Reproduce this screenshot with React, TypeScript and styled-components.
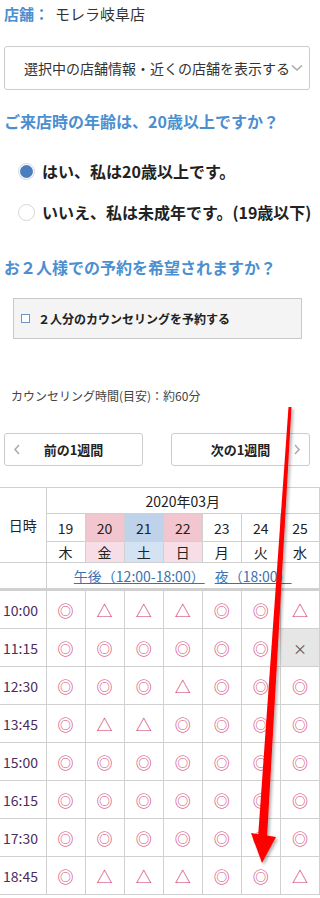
import React from 'react'
import styled, { createGlobalStyle } from 'styled-components'

const font = '"Noto Sans CJK JP", "Noto Sans", sans-serif'
const blue = '#4b8fd1'
const line = '#d0d0d0'

const Global = createGlobalStyle`
  html, body { margin: 0; padding: 0; background: #fff; }
  body { font-family: ${font}; color: #333; }
`

const Page = styled.div`
  position: relative;
  width: 320px;
  height: 898px;
  overflow: hidden;
`

const Store = styled.div`
  padding: 4px 4px 0;
  font-size: 15px;
  line-height: 20px;
  color: #333;
`

const StoreLabel = styled.span`
  color: ${blue};
  font-weight: bold;
  margin-right: 6px;
`

const Select = styled.div`
  margin: 22px 10px 0 4px;
  height: 42px;
  border: 1px solid #ccc;
  border-radius: 3px;
  display: flex;
  align-items: center;
  padding-left: 19px;
  font-size: 14px;
  color: #333;
  white-space: nowrap;
  overflow: hidden;
`

const Chevron = styled.svg`
  flex: none;
  margin-left: 1px;
`

const Question = styled.h2`
  margin: ${p => p.$top}px 0 0 4px;
  font-size: 16px;
  line-height: 22px;
  font-weight: bold;
  color: ${blue};
  white-space: nowrap;
`

const Radios = styled.div`
  display: flex;
  flex-direction: column;
  gap: 18px;
  margin: 28px 0 0 18px;
`

const RadioRow = styled.label`
  display: flex;
  align-items: center;
  gap: 7px;
  font-size: 16px;
  font-weight: bold;
  color: #222;
  white-space: nowrap;
  line-height: 23px;
`

const Dot = styled.span`
  flex: none;
  width: 15px;
  height: 15px;
  border-radius: 50%;
  border: 1px solid #d6d6d6;
  background: #fff;
  display: flex;
  align-items: center;
  justify-content: center;
  &::after {
    content: '';
    width: 13px;
    height: 13px;
    border-radius: 50%;
    background: ${p => (p.$on ? '#4a7fbf' : 'transparent')};
  }
`

const CheckBox = styled.div`
  margin: 20px 18px 0 13px;
  height: 39px;
  background: #f4f4f4;
  border: 1px solid #c8c8c8;
  display: flex;
  align-items: center;
  padding-left: 7px;
  gap: 8px;
  font-size: 12px;
  font-weight: bold;
  color: #222;
`

const Square = styled.span`
  width: 7px;
  height: 7px;
  border: 1px solid #6a95c8;
  background: #fff;
`

const Note = styled.div`
  margin: 48px 0 0 11px;
  font-size: 12px;
  line-height: 18px;
  color: #444;
`

const Nav = styled.div`
  display: flex;
  justify-content: space-between;
  margin: 28px 10px 0 4px;
`

const NavButton = styled.div`
  position: relative;
  width: 137px;
  height: 31px;
  border: 1px solid #ccc;
  border-radius: 3px;
  display: flex;
  align-items: center;
  justify-content: center;
  font-size: 13px;
  font-weight: bold;
  color: #222;
`

const NavArrow = styled.svg`
  position: absolute;
  top: 10px;
  ${p => (p.$side === 'left' ? 'left: 8px;' : 'right: 8px;')}
`

const Table = styled.table`
  margin-top: 21px;
  width: 320px;
  border-collapse: collapse;
  table-layout: fixed;
  font-size: 14px;
  color: #222;
  td, th {
    border: 1px solid ${line};
    padding: 0;
    text-align: center;
    font-weight: normal;
  }
  tr > :first-child { border-left: none; }
`

const Head = styled.th`
  height: ${p => p.$h}px;
  background: ${p => p.$bg || '#fff'};
`

const LinkCell = styled.th`
  height: 25px;
  white-space: nowrap;
  border-bottom-width: 3px !important;
`

const Link = styled.a`
  color: #3a72b4;
  text-decoration: underline;
  margin: 0 5px;
`

const TimeCell = styled.td`
  height: 37px;
  color: #4c2d5e;
  font-size: 14px;
  text-align: left !important;
  padding-left: 3px !important;
`

const Mark = styled.td`
  background: ${p => (p.$full ? '#e6e6e6' : '#fff')};
  color: ${p => (p.$full ? '#4a5a6a' : '#d23c6e')};
  font-size: ${p => (p.$full ? 14 : 16)}px;
`

const Overlay = styled.svg`
  position: absolute;
  left: 0;
  top: 0;
  pointer-events: none;
`

const days = [
  { d: '19', w: '木' },
  { d: '20', w: '金', c: ['#f2c6cf', '#f6dde6'] },
  { d: '21', w: '土', c: ['#bed2ea', '#d3e3f3'] },
  { d: '22', w: '日', c: ['#f2c6cf', '#f6dde6'] },
  { d: '23', w: '月' },
  { d: '24', w: '火' },
  { d: '25', w: '水' },
]

// o = ◎, t = △, x = ×
const rows: [string, string][] = [
  ['10:00', 'otttoot'],
  ['11:15', 'oooooox'],
  ['12:30', 'oootooo'],
  ['13:45', 'ottoooo'],
  ['15:00', 'ooooooo'],
  ['16:15', 'ooooooo'],
  ['17:30', 'ooooooo'],
  ['18:45', 'otttoot'],
]

const glyph = (c: string) => (c === 'o' ? '◎' : c === 'x' ? '×' : '△')

export default function App() {
  return (
    <Page>
      <Global />
      <Store>
        <StoreLabel>店舗：</StoreLabel>モレラ岐阜店
      </Store>
      <Select>
        選択中の店舗情報・近くの店舗を表示する
        <Chevron width="12" height="8" viewBox="0 0 12 8">
          <path d="M1 1.5 L6 6 L11 1.5" fill="none" stroke="#aaa" strokeWidth="1.6" />
        </Chevron>
      </Select>

      <Question $top={20}>ご来店時の年齢は、20歳以上ですか？</Question>
      <Radios>
        <RadioRow>
          <Dot $on />
          はい、私は20歳以上です。
        </RadioRow>
        <RadioRow>
          <Dot />
          いいえ、私は未成年です。(19歳以下)
        </RadioRow>
      </Radios>

      <Question $top={32}>お２人様での予約を希望されますか？</Question>
      <CheckBox>
        <Square />２人分のカウンセリングを予約する
      </CheckBox>

      <Note>カウンセリング時間(目安)：約60分</Note>

      <Nav>
        <NavButton>
          <NavArrow $side="left" width="8" height="11" viewBox="0 0 8 11">
            <path d="M6 1 L2 5.5 L6 10" fill="none" stroke="#aaa" strokeWidth="1.5" />
          </NavArrow>
          前の1週間
        </NavButton>
        <NavButton>
          次の1週間
          <NavArrow $side="right" width="8" height="11" viewBox="0 0 8 11">
            <path d="M2 1 L6 5.5 L2 10" fill="none" stroke="#aaa" strokeWidth="1.5" />
          </NavArrow>
        </NavButton>
      </Nav>

      <Table>
        <colgroup>
          <col style={{ width: 46 }} />
          {days.map(d => (
            <col key={d.d} />
          ))}
        </colgroup>
        <thead>
          <tr>
            <Head rowSpan={3} $h={25}>日時</Head>
            <Head colSpan={7} $h={25}>2020年03月</Head>
          </tr>
          <tr>
            {days.map(d => (
              <Head key={d.d} $h={27} $bg={d.c?.[0]}>
                {d.d}
              </Head>
            ))}
          </tr>
          <tr>
            {days.map(d => (
              <Head key={d.d} $h={20} $bg={d.c?.[1]}>
                {d.w}
              </Head>
            ))}
          </tr>
          <tr>
            <LinkCell />
            <LinkCell colSpan={7}>
              <Link>午後（12:00-18:00）</Link>
              <Link>夜（18:00）</Link>
            </LinkCell>
          </tr>
        </thead>
        <tbody>
          {rows.map(([t, marks]) => (
            <tr key={t}>
              <TimeCell>{t}</TimeCell>
              {marks.split('').map((m, i) => (
                <Mark key={i} $full={m === 'x'}>
                  {glyph(m)}
                </Mark>
              ))}
            </tr>
          ))}
        </tbody>
      </Table>

      <Overlay width="320" height="898" viewBox="0 0 320 898">
        <defs>
          <filter id="sh" x="-50%" y="-10%" width="200%" height="120%">
            <feDropShadow dx="2" dy="2" stdDeviation="1.5" floodColor="#000" floodOpacity="0.3" />
          </filter>
        </defs>
        <g filter="url(#sh)" fill="#ff0000">
          <polygon points="288.5,407 291.5,407 267,838 258,838" />
          <polygon points="251,833 276,837 262,863" />
        </g>
      </Overlay>
    </Page>
  )
}
